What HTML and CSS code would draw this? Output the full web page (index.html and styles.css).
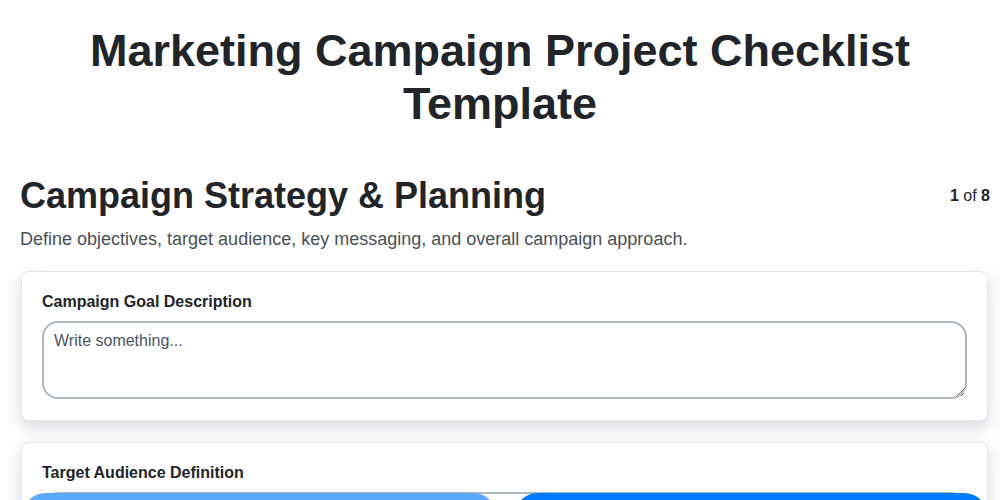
FILE: index.html
```html
<!DOCTYPE html>
<html lang="en">
<head>
<meta charset="utf-8">
<title>Marketing Campaign Project Checklist Template</title>
<link rel="stylesheet" href="styles.css">
</head>
<body>
<div class="page">
  <h1 class="title">Marketing Campaign Project Checklist Template</h1>
  <section class="step">
    <div class="step-head">
      <h2 class="step-title">Campaign Strategy &amp; Planning</h2>
      <div class="step-count"><b>1</b> of <b>8</b></div>
    </div>
    <p class="step-desc">Define objectives, target audience, key messaging, and overall campaign approach.</p>
    <div class="cards">
      <div class="card">
        <label class="card-label">Campaign Goal Description</label>
        <textarea class="field" placeholder="Write something..."></textarea>
      </div>
      <div class="card">
        <label class="card-label">Target Audience Definition</label>
        <textarea class="field" placeholder="Write something..."></textarea>
      </div>
    </div>
  </section>
</div>
<div class="nav">
  <button class="btn btn-prev">Previous</button>
  <button class="btn btn-next">Next</button>
</div>
</body>
</html>
```

FILE: styles.css
```css
* { box-sizing: border-box; }
html, body { margin: 0; padding: 0; background: #ffffff; }
body {
  font-family: "Liberation Sans", Arial, sans-serif;
  color: #212529;
}
.page {
  padding: 24px 10px 80px 20px;
}
.title {
  margin: 0 0 44px;
  font-size: 45px;
  line-height: 53px;
  font-weight: 700;
  text-align: center;
  color: #212529;
  padding: 0 65px 0 55px;
}
.step-head {
  display: flex;
  justify-content: space-between;
  align-items: center;
}
.step-title {
  margin: 0;
  font-size: 36px;
  line-height: 44px;
  font-weight: 700;
  color: #212529;
}
.step-count {
  font-size: 16px;
  color: #212529;
}
.step-count b { font-weight: 700; }
.step-desc {
  margin: 9px 0 20px;
  font-size: 18px;
  line-height: 24px;
  color: #495057;
}
.cards {
  display: flex;
  flex-direction: column;
  gap: 21px;
  padding: 0 2px 0 1px;
}
.card {
  background: #fff;
  border: 1px solid #e6e7ec;
  border-radius: 8px;
  padding: 20px 20px 21px;
  box-shadow: 0 6px 16px rgba(30, 35, 60, 0.18);
  display: flex;
  flex-direction: column;
}
.card-label {
  font-size: 16px;
  font-weight: 700;
  line-height: 20px;
  color: #212529;
  margin-bottom: 9px;
}
.field {
  display: block;
  width: 100%;
  height: 78px;
  border: 2px solid #adb5bd;
  border-radius: 16px;
  padding: 9px 10px;
  font-family: "Liberation Sans", Arial, sans-serif;
  font-size: 16px;
  color: #212529;
  background: #fff;
}
.field::placeholder { color: #4b5563; opacity: 1; }
.nav {
  position: fixed;
  left: 22px;
  right: 12px;
  top: calc(100% - 7px);
  display: flex;
  gap: 17px;
}
.btn {
  flex: 1;
  height: 48px;
  border: none;
  border-radius: 24px;
  font-family: "Liberation Sans", Arial, sans-serif;
  font-size: 16px;
  font-weight: 700;
  color: #fff;
}
.btn-prev { background: #59a9ff; }
.btn-next { background: #007bff; }
```
